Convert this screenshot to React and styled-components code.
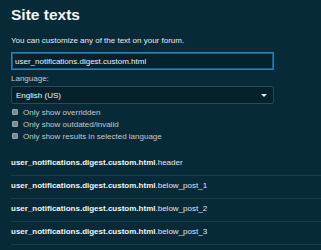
import styled, { createGlobalStyle } from "styled-components";

const GlobalStyle = createGlobalStyle`
  html, body {
    margin: 0;
    padding: 0;
    background: #062a37;
  }
  body {
    font-family: "Liberation Sans", Arial, sans-serif;
    color: #e8eef0;
  }
`;

const results = [
  "header",
  "below_post_1",
  "below_post_2",
  "below_post_3",
];

const App = () => {
  return (
    <Page>
      <GlobalStyle />
      <Title>Site texts</Title>
      <Intro>You can customize any of the text on your forum.</Intro>
      <SearchInput defaultValue="user_notifications.digest.custom.html" />
      <Label>Language:</Label>
      <Select>
        <span>English (US)</span>
        <Caret />
      </Select>
      <Filters>
        <Check text="Only show overridden" />
        <Check text="Only show outdated/invalid" />
        <Check text="Only show results in selected language" />
      </Filters>
      <List>
        {results.map((r) => (
          <Row key={r}>
            <Key>user_notifications.digest.custom.html</Key>
            <Rest>.{r}</Rest>
          </Row>
        ))}
      </List>
    </Page>
  );
};

const Check = ({ text }) => (
  <CheckRow>
    <Box />
    <span>{text}</span>
  </CheckRow>
);

const Page = styled.div`
  width: 321px;
  height: 250px;
  overflow: hidden;
  padding: 0 0 0 11px;
  box-sizing: border-box;
`;

const Title = styled.h1`
  margin: 0;
  padding-top: 6px;
  font-size: 15.5px;
  line-height: 18px;
  font-weight: bold;
  color: #f4f7f8;
`;

const Intro = styled.p`
  margin: 12px 0 0;
  font-size: 8px;
  line-height: 10px;
  color: #e6ecee;
`;

const SearchInput = styled.input`
  display: block;
  box-sizing: border-box;
  width: 263px;
  height: 18px;
  margin-top: 6px;
  padding: 0 3px;
  font-family: "Liberation Sans", Arial, sans-serif;
  font-size: 8px;
  color: #f0f4f5;
  background: #04212c;
  border: 1px solid #2a80b2;
  box-shadow: inset 0 0 0 1px #1a5f88;
  outline: none;
`;

const Label = styled.div`
  margin-top: 3px;
  font-size: 8px;
  line-height: 12px;
  color: #c3cdd1;
`;

const Select = styled.div`
  box-sizing: border-box;
  width: 263px;
  height: 18px;
  margin-top: 1px;
  padding: 0 6px 0 4px;
  display: flex;
  align-items: center;
  justify-content: space-between;
  font-size: 8px;
  color: #f4f7f8;
  background: #04212c;
  border: 1px solid #2c4a55;
  border-radius: 2px;
`;

const Caret = styled.span`
  width: 0;
  height: 0;
  border-left: 3px solid transparent;
  border-right: 3px solid transparent;
  border-top: 3px solid #e8eef0;
`;

const Filters = styled.div`
  margin-top: 2px;
  display: flex;
  flex-direction: column;
`;

const CheckRow = styled.div`
  display: flex;
  align-items: center;
  gap: 5px;
  height: 12px;
  font-size: 8px;
  color: #c0cace;
`;

const Box = styled.span`
  width: 4px;
  height: 4px;
  margin-left: 1px;
  background: #7b8a90;
  border: 1px solid #9aa6ab;
  border-radius: 1px;
`;

const List = styled.div`
  margin-top: 11px;
  width: 310px;
`;

const Row = styled.div`
  box-sizing: border-box;
  height: 23px;
  padding-top: 5px;
  font-size: 8px;
  line-height: 10px;
  border-bottom: 1px solid #1a3c48;
  color: #f2f5f6;
`;

const Key = styled.span`
  font-weight: bold;
`;

const Rest = styled.span`
  font-weight: normal;
  color: #e2e8ea;
`;

export default App;
